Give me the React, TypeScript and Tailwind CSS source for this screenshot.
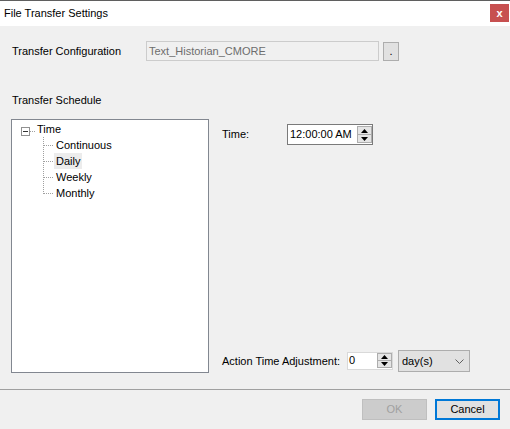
import React from "react";

// WinForms-style dialog: File Transfer Settings

const SpinButtons = ({ h }: { h: string }) => (
  <div className={`flex flex-col w-[15px] ${h} shrink-0`}>
    <div className="flex-1 flex items-center justify-center border border-[#adadad] bg-[#e5e5e5]">
      <svg width="7" height="4" viewBox="0 0 7 4">
        <path d="M0 4 L3.5 0 L7 4 Z" fill="#000" />
      </svg>
    </div>
    <div className="flex-1 flex items-center justify-center border border-t-0 border-[#adadad] bg-[#e5e5e5]">
      <svg width="7" height="4" viewBox="0 0 7 4">
        <path d="M0 0 L3.5 4 L7 0 Z" fill="#000" />
      </svg>
    </div>
  </div>
);

const children = ["Continuous", "Daily", "Weekly", "Monthly"];

const ScheduleTree = () => (
  <div className="w-[198px] h-full border border-[#828790] bg-white pt-[1px]">
    <div className="flex h-[16px] leading-[16px]">
      <svg width="25" height="16" className="shrink-0" shapeRendering="crispEdges">
        <rect x="9.5" y="6.5" width="8" height="8" fill="#fff" stroke="#919191" />
        <line x1="11" y1="10.5" x2="16" y2="10.5" stroke="#333" />
        <line x1="18" y1="10.5" x2="24" y2="10.5" stroke="#a0a0a0" strokeDasharray="1 1" />
      </svg>
      <span>Time</span>
    </div>
    {children.map((c, i) => (
      <div key={c} className="flex h-[16px] leading-[16px]">
        <svg width="42" height="16" className="shrink-0" shapeRendering="crispEdges">
          <line
            x1="31.5"
            y1="0"
            x2="31.5"
            y2={i === children.length - 1 ? 9 : 16}
            stroke="#a0a0a0"
            strokeDasharray="1 1"
          />
          <line x1="32" y1="8.5" x2="42" y2="8.5" stroke="#a0a0a0" strokeDasharray="1 1" />
        </svg>
        <span className={`px-[2px] ${c === "Daily" ? "bg-[#ececec]" : ""}`}>{c}</span>
      </div>
    ))}
  </div>
);

export default function App() {
  return (
    <div className="w-[510px] h-[429px] bg-[#f0f0f0] flex flex-col overflow-hidden border-t border-[#5f5f5f] text-[11px] text-black font-['Liberation_Sans',Arial,sans-serif]">
      {/* title bar */}
      <div className="h-[25px] bg-white flex items-start justify-between pl-[4px] pr-[1px] shrink-0">
        <span className="mt-[6px] leading-[13px]">File Transfer Settings</span>
        <button className="mt-[3px] w-[19px] h-[18px] bg-[#c75050] text-white font-bold text-[11px] leading-[18px] flex items-center justify-center">
          x
        </button>
      </div>

      <div className="flex flex-col px-[11px] shrink-0">
        <div className="mt-[15px] h-[20px] flex items-center">
          <span className="w-[135px] pl-[1px] leading-[13px]">Transfer Configuration</span>
          <div className="w-[233px] h-[20px] border border-[#cccccc] bg-[#f0f0f0] text-[#6d6d6d] pl-[2px] leading-[18px]">
            Text_Historian_CMORE
          </div>
          <button className="ml-[4px] w-[16px] h-[19px] border border-[#adadad] bg-[#e1e1e1] leading-[15px] text-center">
            .
          </button>
        </div>

        <div className="mt-[33px] pl-[1px] leading-[13px]">Transfer Schedule</div>

        <div className="mt-[12px] h-[254px] flex">
          <ScheduleTree />
          <div className="flex-1 flex flex-col justify-between pl-[13px] pt-[5px] pb-[1px]">
            <div className="flex items-center h-[21px]">
              <span className="w-[65px] leading-[13px]">Time:</span>
              <div className="w-[86px] h-[21px] border border-[#7a7a7a] bg-white flex items-center justify-between pl-[2px] pr-0">
                <span className="leading-[17px]">12:00:00 AM</span>
                <SpinButtons h="h-[17px]" />
              </div>
            </div>

            <div className="flex items-center h-[22px]">
              <span className="w-[125px] leading-[13px]">Action Time Adjustment:</span>
              <div className="w-[46px] h-[18px] border border-[#d9d9d9] bg-white flex items-start justify-between pl-[1px]">
                <span className="leading-[15px]">0</span>
                <SpinButtons h="h-[15px]" />
              </div>
              <div className="ml-[5px] w-[72px] h-[22px] border border-[#adadad] bg-[#e1e1e1] flex items-center justify-between pl-[3px] pr-[5px]">
                <span className="leading-[13px]">day(s)</span>
                <svg width="9" height="5" viewBox="0 0 9 5">
                  <path d="M0.5 0.5 L4.5 4.5 L8.5 0.5" fill="none" stroke="#606060" />
                </svg>
              </div>
            </div>
          </div>
        </div>
      </div>

      <div className="mt-[16px] h-px bg-[#a0a0a0] shrink-0" />

      <div className="flex justify-end gap-[8px] pt-[9px] pr-[10px]">
        <button
          disabled
          className="w-[65px] h-[21px] border border-[#bfbfbf] bg-[#cccccc] text-[#a0a0a0] leading-[19px] text-center"
        >
          OK
        </button>
        <button className="w-[65px] h-[21px] border-2 border-[#0078d7] bg-[#e1e1e1] leading-[17px] text-center">
          Cancel
        </button>
      </div>
    </div>
  );
}
